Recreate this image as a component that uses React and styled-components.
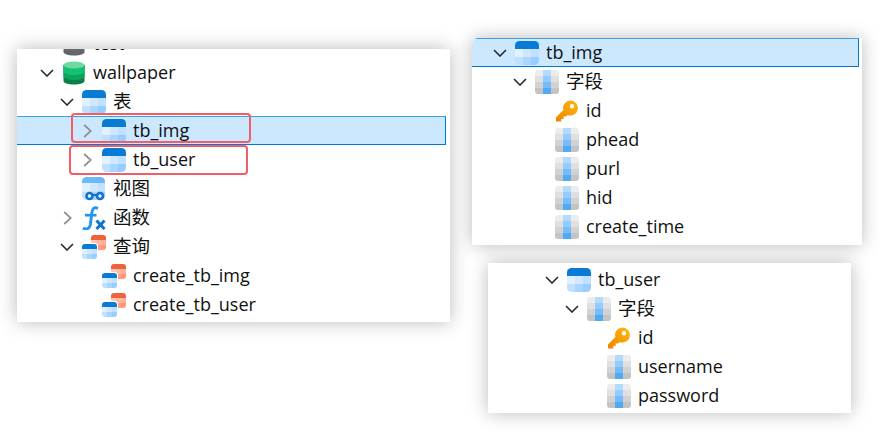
import React from "react";
import styled, { createGlobalStyle } from "styled-components";

const Global = createGlobalStyle`
  html, body { margin: 0; padding: 0; background: #fff; }
  body { width: 895px; height: 432px; overflow: hidden; font-family: "Open Sans", "Noto Sans", sans-serif; }
`;

const Page = styled.div`
  display: flex;
  align-items: flex-start;
  width: 895px;
  height: 432px;
  padding-left: 17px;
  box-sizing: border-box;
`;
const RightColumn = styled.div`
  display: flex;
  flex-direction: column;
  margin-left: 22px;
`;
const Panel = styled.section`
  position: relative;
  box-sizing: border-box;
  background: #fff;
  overflow: hidden;
  flex: none;
  box-shadow: 0 0 18px rgba(0, 0, 0, 0.27);
  width: ${p => p.$w}px;
  height: ${p => p.$h}px;
  margin-top: ${p => p.$top}px;
  margin-left: ${p => p.$left || 0}px;
  border-top-left-radius: ${p => p.$round ? 6 : 0}px;
`;
const Tree = styled.ul`
  list-style: none;
  margin: ${p => p.$offset}px ${p => p.$gutter}px 0 0;
  padding: 0;
`;
const Row = styled.li`
  display: flex;
  align-items: center;
  height: 29px;
  box-sizing: border-box;
  padding-left: ${p => p.$base + p.$level * 20}px;
  ${p => p.$selected && `
    background: #cbe8ff;
    border-top: 1px solid #3d9fe6;
    border-bottom: 1px solid #0078d7;
    border-right: 1px solid #0078d7;
  `}
`;
const ChevronSlot = styled.span`
  display: flex;
  align-items: center;
  justify-content: center;
  flex: none;
  width: 20px;
  height: 20px;
  margin-right: 5px;
`;
const IconSlot = styled.span`
  display: block;
  flex: none;
  width: 24px;
  height: 24px;
  margin-right: 7px;
  svg { display: block; }
`;
const Label = styled.span`
  color: #111;
  white-space: nowrap;
  font-family: ${p => p.$zh ? '"Noto Sans CJK SC", sans-serif' : '"Open Sans", sans-serif'};
  font-size: ${p => p.$zh ? 18.5 : 18}px;
  line-height: 24px;
  margin-top: ${p => p.$zh ? -3 : -2}px;
`;
const Highlight = styled.div`
  position: absolute;
  box-sizing: border-box;
  left: ${p => p.$x}px;
  top: ${p => p.$y}px;
  width: ${p => p.$w}px;
  height: 30px;
  border: 2px solid #f25d66;
  border-radius: 4px;
`;

const Chevron = ({ open }) =>
  open ? (
    <svg width="14" height="8" viewBox="0 0 14 8"><path d="M1 1 L7 7 L13 1" fill="none" stroke="#2b2b2b" strokeWidth="1.6" /></svg>
  ) : (
    <svg width="9" height="14" viewBox="0 0 9 14"><path d="M1.2 1 L7.8 7 L1.2 13" fill="none" stroke="#8f8f8f" strokeWidth="1.7" /></svg>
  );

const Grid = ({ x, y, w, h, colors }) => {
  const cw = w / 3;
  const rows = colors.length;
  const ch = h / rows;
  return colors.flatMap((row, r) =>
    row.map((c, i) => <rect key={`${r}-${i}`} x={x + i * cw} y={y + r * ch} width={cw + 0.1} height={ch + 0.1} fill={c} />)
  );
};

const blueCells = [
  ["#e2f1ff", "#cfe8ff", "#c0e1ff"],
  ["#bfe0ff", "#a9d6ff", "#97ceff"],
];

let uid = 0;
const TableIcon = () => {
  const id = React.useMemo(() => `t${uid++}`, []);
  return (
    <svg width="24" height="24" viewBox="0 0 24 24">
      <clipPath id={id}><rect width="24" height="24" rx="4.5" /></clipPath>
      <g clipPath={`url(#${id})`}>
        <rect width="24" height="8" fill="#0a7bd4" />
        <Grid x={0} y={8} w={24} h={16} colors={blueCells} />
      </g>
    </svg>
  );
};
const ViewIcon = () => {
  const id = React.useMemo(() => `t${uid++}`, []);
  return (
    <svg width="24" height="24" viewBox="0 0 24 24">
      <clipPath id={id}><rect y="0" width="23" height="23" rx="4.5" /></clipPath>
      <g clipPath={`url(#${id})`}>
        <rect width="24" height="6" fill="#6db9f5" />
        <Grid x={0} y={6} w={24} h={17} colors={blueCells} />
      </g>
      <circle cx="7.5" cy="19" r="3" fill="#fff" stroke="#1273cc" strokeWidth="2.6" />
      <circle cx="18" cy="19" r="3" fill="#fff" stroke="#1273cc" strokeWidth="2.6" />
      <path d="M10 18 H15.5" stroke="#1273cc" strokeWidth="2.2" />
    </svg>
  );
};
const FuncIcon = () => (
  <svg width="24" height="24" viewBox="0 0 24 24">
    <path d="M16 2.4 C12 0.8 10.3 2.6 9.8 7 L8.4 18.5 C7.8 22.6 5 23.8 0.8 22.4" fill="none" stroke="#2196f0" strokeWidth="2.9" />
    <path d="M3 9.2 H14.5" fill="none" stroke="#2196f0" strokeWidth="2.7" />
    <path d="M14.5 14.5 L22.5 23 M22.5 14.5 L14.5 23" fill="none" stroke="#0f74d0" strokeWidth="3" />
  </svg>
);
const QueryIcon = () => {
  const a = React.useMemo(() => `t${uid++}`, []);
  const b = React.useMemo(() => `t${uid++}`, []);
  return (
    <svg width="24" height="24" viewBox="0 0 24 24">
      <clipPath id={a}><rect x="9" y="0" width="15" height="15" rx="3" /></clipPath>
      <clipPath id={b}><rect x="0" y="9" width="15" height="15" rx="3" /></clipPath>
      <g clipPath={`url(#${a})`}>
        <rect x="9" y="0" width="15" height="5" fill="#f0623c" />
        <Grid x={9} y={5} w={15} h={10} colors={[["#ffc7b5", "#ffbba6", "#ffb09a"], ["#ffae97", "#ffa085", "#ff9678"]]} />
      </g>
      <rect x="-1" y="8" width="17" height="17" rx="3.5" fill="#fff" />
      <g clipPath={`url(#${b})`}>
        <rect x="0" y="9" width="15" height="5" fill="#0a7bd4" />
        <Grid x={0} y={14} w={15} h={10} colors={blueCells} />
      </g>
    </svg>
  );
};
const DbIcon = ({ c }) => (
  <svg width="24" height="24" viewBox="0 0 24 24">
    <path d="M1.5 4 V20 C1.5 22 6 23.5 12 23.5 C18 23.5 22.5 22 22.5 20 V4 Z" fill={c[3]} />
    <path d="M1.5 4 V15.5 C1.5 17.5 6 19 12 19 C18 19 22.5 17.5 22.5 15.5 V4 Z" fill={c[2]} />
    <path d="M1.5 4 V10.5 C1.5 12.5 6 14 12 14 C18 14 22.5 12.5 22.5 10.5 V4 Z" fill={c[1]} />
    <ellipse cx="12" cy="4" rx="10.5" ry="3.6" fill={c[0]} />
  </svg>
);
const green = ["#6fd9a2", "#13c172", "#0ca35f", "#0a7f49"];
const gray = ["#8a8e94", "#6e7278", "#686c72", "#62666c"];
const FieldIcon = () => {
  const id = React.useMemo(() => `t${uid++}`, []);
  return (
    <svg width="24" height="24" viewBox="0 0 24 24">
      <clipPath id={id}><rect width="24" height="24" rx="3" /></clipPath>
      <g clipPath={`url(#${id})`}>
        <Grid x={0} y={0} w={24} h={24} colors={[
          ["#ececec", "#b3daff", "#ececec"],
          ["#e0e0e0", "#95ccff", "#e0e0e0"],
          ["#d2d2d2", "#74bcfb", "#d2d2d2"],
          ["#c4c4c4", "#4fa9f5", "#c4c4c4"],
        ]} />
      </g>
    </svg>
  );
};
const KeyIcon = () => (
  <svg width="24" height="24" viewBox="0 0 24 24">
    <defs>
      <linearGradient id="keyfill" x1="1" y1="0" x2="0" y2="1">
        <stop offset="0" stopColor="#ffb80a" />
        <stop offset="1" stopColor="#ee8500" />
      </linearGradient>
    </defs>
    <path fillRule="evenodd" fill="url(#keyfill)" d="M15.5 1.5 A7.5 7.5 0 1 1 12.7 16 L11 17.6 L8.6 17.6 L8.6 20 L6.2 20 L6.2 22.4 L1 22.4 L1 18.5 L8.4 11 A7.5 7.5 0 0 1 15.5 1.5 Z M17 5 A2.2 2.2 0 1 0 17 9.4 A2.2 2.2 0 1 0 17 5 Z" />
  </svg>
);

const icons = {
  table: TableIcon, view: ViewIcon, func: FuncIcon, query: QueryIcon,
  field: FieldIcon, key: KeyIcon,
  db: () => <DbIcon c={green} />,
  dbGray: () => <DbIcon c={gray} />,
};

const TreeRows = ({ rows, base }) =>
  rows.map(r => {
    const Icon = icons[r.icon];
    return (
      <Row key={r.text + r.level} $level={r.level} $base={base} $selected={r.selected}>
        <ChevronSlot>{r.chev && <Chevron open={r.chev === "open"} />}</ChevronSlot>
        <IconSlot><Icon /></IconSlot>
        <Label $zh={r.zh}>{r.text}</Label>
      </Row>
    );
  });

const leftRows = [
  { level: 0, icon: "dbGray", text: "test" },
  { level: 0, icon: "db", text: "wallpaper", chev: "open" },
  { level: 1, icon: "table", text: "表", chev: "open", zh: true },
  { level: 2, icon: "table", text: "tb_img", chev: "closed", selected: true },
  { level: 2, icon: "table", text: "tb_user", chev: "closed" },
  { level: 1, icon: "view", text: "视图", zh: true },
  { level: 1, icon: "func", text: "函数", chev: "closed", zh: true },
  { level: 1, icon: "query", text: "查询", chev: "open", zh: true },
  { level: 2, icon: "query", text: "create_tb_img" },
  { level: 2, icon: "query", text: "create_tb_user" },
];
const imgRows = [
  { level: 0, icon: "table", text: "tb_img", chev: "open", selected: true },
  { level: 1, icon: "field", text: "字段", chev: "open", zh: true },
  { level: 2, icon: "key", text: "id" },
  { level: 2, icon: "field", text: "phead" },
  { level: 2, icon: "field", text: "purl" },
  { level: 2, icon: "field", text: "hid" },
  { level: 2, icon: "field", text: "create_time" },
];
const userRows = [
  { level: 0, icon: "table", text: "tb_user", chev: "open" },
  { level: 1, icon: "field", text: "字段", chev: "open", zh: true },
  { level: 2, icon: "key", text: "id" },
  { level: 2, icon: "field", text: "username" },
  { level: 2, icon: "field", text: "password" },
];

export default function App() {
  return (
    <Page>
      <Global />
      <Panel $w={433} $h={273} $top={49}>
        <Tree $offset={-20} $gutter={4}><TreeRows rows={leftRows} base={20} /></Tree>
        <Highlight $x={54} $y={64} $w={180} />
        <Highlight $x={52} $y={96} $w={179} />
      </Panel>
      <RightColumn>
        <Panel $w={390} $h={207} $top={38} $round>
          <Tree $offset={0} $gutter={3}><TreeRows rows={imgRows} base={18} /></Tree>
        </Panel>
        <Panel $w={363} $h={150} $top={18} $left={16}>
          <Tree $offset={2} $gutter={0}><TreeRows rows={userRows} base={54} /></Tree>
        </Panel>
      </RightColumn>
    </Page>
  );
}
